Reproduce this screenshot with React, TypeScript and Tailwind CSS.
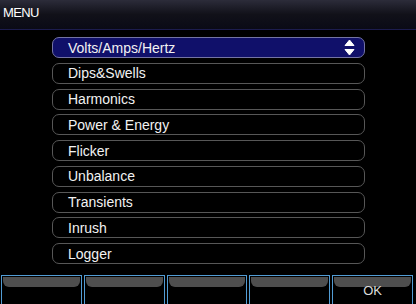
import React from "react";

const items = [
  "Volts/Amps/Hertz",
  "Dips&Swells",
  "Harmonics",
  "Power & Energy",
  "Flicker",
  "Unbalance",
  "Transients",
  "Inrush",
  "Logger",
];

const softKeys = ["", "", "", "", "OK"];

function UpDownIcon() {
  return (
    <svg width="11" height="17" viewBox="0 0 11 17" className="shrink-0">
      <polygon points="5.5,1 10,6.5 1,6.5" fill="#ffffff" stroke="#ffffff" strokeWidth="1" strokeLinejoin="round" />
      <polygon points="1,10.5 10,10.5 5.5,16" fill="#ffffff" stroke="#ffffff" strokeWidth="1" strokeLinejoin="round" />
    </svg>
  );
}

export default function App() {
  const selected = 0;

  return (
    <div
      className="w-[416px] h-[304px] bg-black flex flex-col overflow-hidden text-white"
      style={{ fontFamily: '"Liberation Sans", Arial, sans-serif' }}
    >
      {/* Title bar */}
      <div className="h-[30px] shrink-0 bg-gradient-to-b from-[#2c2c3a] via-[#111119] to-[#0a0a16] border-b border-[#1c1c4e] flex items-start pl-[3px] pt-[6px]">
        <span className="text-[13px] leading-[14px] tracking-[-0.6px] text-white">MENU</span>
      </div>

      {/* Menu list */}
      <div className="flex flex-col gap-[4.75px] pt-[7px] pl-[52px]">
        {items.map((label, i) => (
          <div
            key={label}
            className={
              i === selected
                ? "w-[313px] h-[21px] rounded-[7px] border border-[#7474a4] bg-[#10106a] flex items-center justify-between pl-[15px] pr-[9px]"
                : "w-[313px] h-[21px] rounded-[7px] border border-[#575757] bg-black flex items-center pl-[15px] pr-[9px]"
            }
          >
            <span className="text-[14px] leading-[16px] text-[#f2f2f2]">{label}</span>
            {i === selected && <UpDownIcon />}
          </div>
        ))}
      </div>

      {/* Soft keys */}
      <div className="mt-auto h-[29px] flex gap-[2px] pl-[1px] pr-[3px]">
        {softKeys.map((label, i) => (
          <div
            key={i}
            className="flex-1 border-t border-l border-r border-[#529cd4] bg-black flex flex-col relative"
          >
            <div className="mx-[1px] mt-[1px] h-[10px] rounded-b-[6px] bg-[#4e4e4e]" />
            {label && (
              <span className="absolute left-0 right-0 top-[8px] text-center text-[13px] leading-[14px] text-[#dcdcdc]">
                {label}
              </span>
            )}
          </div>
        ))}
      </div>
    </div>
  );
}
